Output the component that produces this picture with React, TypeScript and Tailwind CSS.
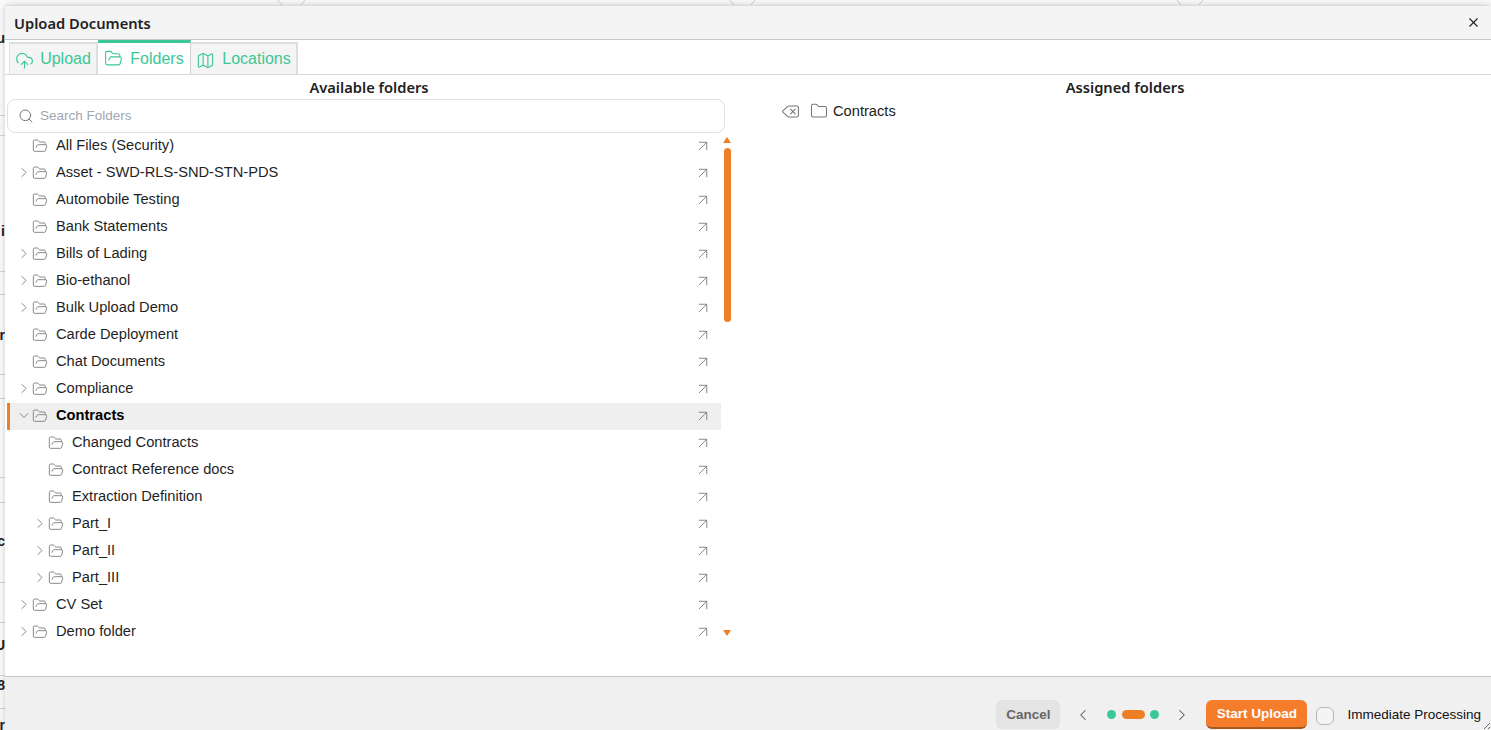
import React from "react";
import { ArrowUpRight, ChevronDown, ChevronLeft, ChevronRight, CloudUpload, Delete, Folder, FolderOpen, Map as MapIcon, Search, X } from "lucide-react";

type Row = { name: string; level: number; chevron?: "right" | "down"; active?: boolean };

const rows: Row[] = [
  { name: "All Files (Security)", level: 0 },
  { name: "Asset - SWD-RLS-SND-STN-PDS", level: 0, chevron: "right" },
  { name: "Automobile Testing", level: 0 },
  { name: "Bank Statements", level: 0 },
  { name: "Bills of Lading", level: 0, chevron: "right" },
  { name: "Bio-ethanol", level: 0, chevron: "right" },
  { name: "Bulk Upload Demo", level: 0, chevron: "right" },
  { name: "Carde Deployment", level: 0 },
  { name: "Chat Documents", level: 0 },
  { name: "Compliance", level: 0, chevron: "right" },
  { name: "Contracts", level: 0, chevron: "down", active: true },
  { name: "Changed Contracts", level: 1 },
  { name: "Contract Reference docs", level: 1 },
  { name: "Extraction Definition", level: 1 },
  { name: "Part_I", level: 1, chevron: "right" },
  { name: "Part_II", level: 1, chevron: "right" },
  { name: "Part_III", level: 1, chevron: "right" },
  { name: "CV Set", level: 0, chevron: "right" },
  { name: "Demo folder", level: 0, chevron: "right" },
];

const stripLines = [115, 135, 271, 294, 374, 398, 477, 502, 582, 622, 675, 708];
const stripLetters = [
  { y: 30, c: "u" },
  { y: 223, c: "i" },
  { y: 327, c: "r" },
  { y: 533, c: "c" },
  { y: 637, c: "U" },
  { y: 677, c: "8" },
  { y: 717, c: "r" },
];

function TreeRow({ row }: { row: Row }) {
  return (
    <div className={`flex h-[27px] w-[714px] items-center pb-[2px] ${row.active ? "bg-[#efefef] border-l-[3px] border-[#ee7f27]" : "border-l-[3px] border-transparent"}`}>
      <div className={`flex items-center ${row.level === 1 ? "pl-[22px]" : "pl-[6px]"}`}>
        <span className="flex w-[16px] justify-center text-[#707070]">
          {row.chevron === "right" && <ChevronRight size={17} strokeWidth={1.25} />}
          {row.chevron === "down" && <ChevronDown size={17} strokeWidth={1.25} />}
        </span>
        <FolderOpen size={16} strokeWidth={1.4} className="text-[#808080]" />
      </div>
      <span className={`mb-[2px] ml-[8px] flex-1 text-[14.67px] text-[#1f1f1f] ${row.active ? "font-bold text-black" : ""}`}>{row.name}</span>
      <ArrowUpRight size={18} strokeWidth={1.15} className="mr-[9px] text-[#777]" />
    </div>
  );
}

export default function App() {
  return (
    <div className="relative h-[730px] w-[1491px] overflow-hidden bg-[#fafafa] font-['Liberation_Sans',Arial,sans-serif]">
      {stripLines.map((y) => (
        <div key={y} className="absolute left-0 h-px w-[5px] bg-[#d6d6d6]" style={{ top: y }} />
      ))}
      {stripLetters.map((l) => (
        <div key={l.y} className="absolute left-[-6px] w-[11px] overflow-hidden text-right text-[14px] font-bold leading-[16px] text-[#222]" style={{ top: l.y }}>
          {l.c}
        </div>
      ))}
      <svg className="absolute left-0 top-0" width="1491" height="6" fill="none" stroke="#cfcfcf" strokeWidth="1">
        <path d="M278 0 L282 5 M305 0 L301 5 M730 0 L734 5 M755 0 L751 5 M1177 0 L1181 5 M1203 0 L1199 5" />
      </svg>

      <div className="absolute bottom-0 left-[5px] right-0 top-[5px] flex flex-col rounded-t-[4px] border-t border-[#dcdcdc] bg-white shadow-[0_0_6px_rgba(0,0,0,0.2)]">
        <header className="flex h-[34px] shrink-0 items-center justify-between border-b border-[#c8c8c8] bg-[#f4f4f4] pl-[9px] pr-[10px] pt-[1px]">
          <h1 className="font-['Noto_Sans',sans-serif] text-[14.7px] font-semibold text-[#222]">Upload Documents</h1>
          <X size={15} strokeWidth={1.75} className="mb-[1px] text-[#222]" />
        </header>

        <nav className="flex h-[35px] shrink-0 items-stretch border-b border-[#d9d9d9] pl-[4px] text-[16px] text-[#3cc796]">
          <div className="mt-[2px] flex w-[89px] items-center justify-center gap-[6px] border-l border-r-2 border-t-2 border-[#dedede] bg-[#f4f4f4]">
            <CloudUpload size={19} strokeWidth={1.4} className="mt-[2px]" />
            <span>Upload</span>
          </div>
          <div className="flex w-[93px] items-center justify-center gap-[7px] border-r border-t-[3px] border-r-[#d0d0d0] border-t-[#3cc796] bg-white">
            <FolderOpen size={19} strokeWidth={1.4} />
            <span>Folders</span>
          </div>
          <div className="mt-[2px] flex w-[107px] items-center justify-center gap-[7px] border-r-2 border-t-2 border-[#dedede] bg-[#f4f4f4]">
            <MapIcon size={19} strokeWidth={1.4} className="mt-[2px]" />
            <span>Locations</span>
          </div>
        </nav>

        <main className="flex min-h-0 flex-1">
          <section className="flex w-[754px] shrink-0 flex-col pl-[2px]">
            <h2 className="flex h-[24px] w-[724px] shrink-0 items-center justify-center font-['Noto_Sans',sans-serif] text-[14.7px] font-semibold text-[#222]">Available folders</h2>
            <div className="flex h-[34px] w-[718px] shrink-0 items-center gap-[6px] rounded-[8px] border border-[#e0e0e0] bg-white pl-[10px]">
              <Search size={16} strokeWidth={1.5} className="text-[#777]" />
              <span className="text-[13.5px] text-[#a0a6b2]">Search Folders</span>
            </div>
            <div className="flex">
              <div className="w-[715px]">
                {rows.map((r) => (
                  <TreeRow key={r.name} row={r} />
                ))}
              </div>
              <div className="flex h-[506px] w-[10px] flex-col items-center">
                <div className="mt-[4px] h-0 w-0 border-x-[4.5px] border-b-[6px] border-x-transparent border-b-[#ee7f27]" />
                <div className="mt-[5px] h-[174px] w-[7px] rounded-full bg-[#ee7f27]" />
                <div className="mb-[3px] mt-auto h-0 w-0 border-x-[4.5px] border-t-[6px] border-x-transparent border-t-[#ee7f27]" />
              </div>
            </div>
          </section>

          <section className="flex flex-1 flex-col">
            <h2 className="flex h-[24px] shrink-0 items-center justify-center font-['Noto_Sans',sans-serif] text-[14.7px] font-semibold text-[#222]">Assigned folders</h2>
            <div className="flex h-[24px] items-center pl-[22px]">
              <Delete size={19} strokeWidth={1.4} className="text-[#777]" />
              <Folder size={18} strokeWidth={1.4} className="ml-[10px] text-[#777]" />
              <span className="ml-[5px] text-[14.67px] text-[#222]">Contracts</span>
            </div>
          </section>
        </main>

        <footer className="relative flex h-[54px] shrink-0 items-end justify-end border-t border-[#c8c8c8] bg-[#f0f0f0] pb-px pr-[10px]">
          <button className="flex h-[29px] w-[64px] items-center justify-center rounded-[6px] bg-[#e4e4e4] pt-[2px] text-[13.5px] font-bold text-[#666]">Cancel</button>
          <div className="ml-[14px] flex h-[29px] items-center">
            <ChevronLeft size={18} strokeWidth={1.4} className="text-[#555]" />
            <span className="ml-[15px] h-[9px] w-[9px] rounded-full bg-[#3cc796]" />
            <span className="ml-[6px] h-[9px] w-[23px] rounded-full bg-[#ee7f27]" />
            <span className="ml-[5px] h-[9px] w-[9px] rounded-full bg-[#3cc796]" />
            <ChevronRight size={18} strokeWidth={1.4} className="ml-[14px] text-[#555]" />
          </div>
          <button className="ml-[15px] flex h-[29px] w-[101px] items-center justify-center rounded-[6px] border-b-2 border-[#a85a1c] bg-[#f57c2b] pt-[2px] text-[13.5px] font-bold text-white">Start Upload</button>
          <div className="ml-[9px] flex h-[29px] items-center pt-[2px]">
            <span className="h-[18px] w-[18px] rounded-[6px] border border-[#b5b5b5] bg-[#f4f4f4]" />
            <span className="ml-[13px] text-[13.5px] text-[#111]">Immediate Processing</span>
          </div>
          <svg className="absolute bottom-0 right-0" width="10" height="10" fill="none" stroke="#666" strokeWidth="1">
            <path d="M9 3 L3 9 M9 7 L7 9" />
          </svg>
        </footer>
      </div>
    </div>
  );
}
